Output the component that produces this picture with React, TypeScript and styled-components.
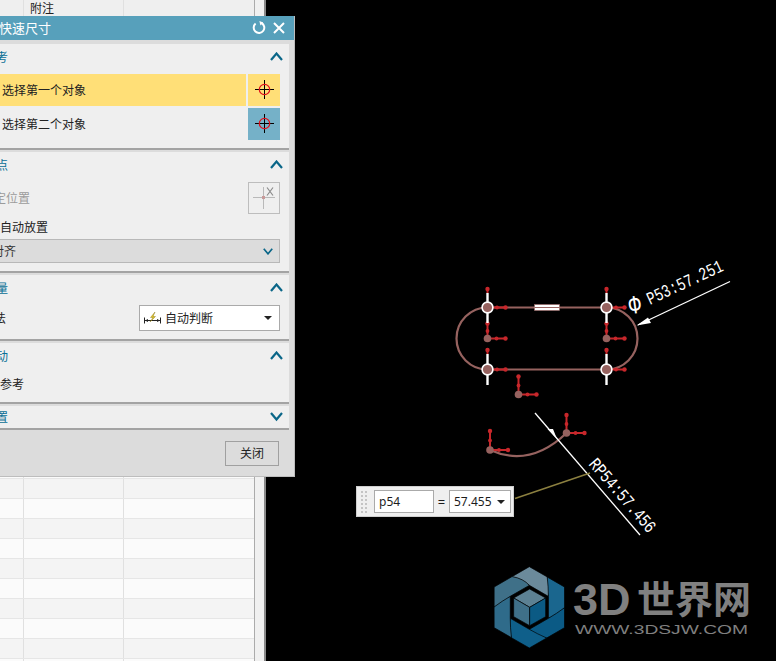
import React from 'react';
import styled, { createGlobalStyle } from 'styled-components';

const GlobalStyle = createGlobalStyle`
  html, body {
    margin: 0;
    padding: 0;
    background: #000;
    overflow: hidden;
  }
  body {
    font-family: "Noto Sans CJK SC", "Noto Sans", sans-serif;
    font-size: 12px;
  }
`;

const Page = styled.div`
  position: relative;
  display: flex;
  width: 776px;
  height: 661px;
  overflow: hidden;
  background: #000;
`;

/* ---- table behind the dialog ---- */

const TablePanel = styled.div`
  display: flex;
  flex: 0 0 266px;
  background: #f0f0f0;
  border-right: 2px solid #8a8a8a;
  box-sizing: border-box;
`;

const TableBody = styled.div`
  flex: 0 0 254px;
  margin-top: -1px;
  border-right: 1px solid #ababab;
`;

const TableRow = styled.div`
  display: flex;
  height: 20px;
  box-sizing: border-box;
  border-bottom: 1px solid #e6e6e6;
  background: #fbfbfb;

  &:nth-child(odd) {
    background: #f4f4f4;
  }
  &:first-child {
    background: #efefef;
  }
`;

const TableCell = styled.div<{ $width: number }>`
  flex: 0 0 ${(p) => p.$width}px;
  box-sizing: border-box;
  padding-left: 6px;
  border-right: 1px solid #e0e0e0;
  line-height: 18px;
  color: #222;
`;

/* ---- quick dimension dialog ---- */

const Dialog = styled.div`
  position: absolute;
  left: -30px;
  top: 16px;
  width: 325px;
  height: 461px;
  box-sizing: border-box;
  display: flex;
  flex-direction: column;
  background: #dcdcdc;
  border-right: 1px solid #bdbdbd;
  border-bottom: 1px solid #bdbdbd;
`;

const TitleBar = styled.div`
  flex: 0 0 24px;
  display: flex;
  align-items: center;
  padding: 0 9px 0 29px;
  background: #57a0bb;
  color: #fff;
  font-size: 13px;
`;

const TitleText = styled.span`
  flex: 1;
  margin-top: -2px;
`;

const TitleIcons = styled.div`
  display: flex;
  align-items: center;
  gap: 7px;
`;

const Sections = styled.div`
  display: flex;
  flex-direction: column;
  gap: 2px;
  margin: 4px 5px 0 0;
`;

const Section = styled.div<{ $bottom?: number }>`
  padding: 0 9px ${(p) => p.$bottom ?? 8}px 0;
  background: #efefef;
  border-bottom: 2px solid #a3a3a3;
`;

const SectionHead = styled.div<{ $height?: number }>`
  display: flex;
  align-items: center;
  justify-content: space-between;
  height: ${(p) => p.$height ?? 26}px;
  margin-bottom: ${(p) => (p.$height ? 0 : 4)}px;
  margin-right: -3px;
  padding-left: 14px;
  color: #0a6f96;
  font-size: 12px;
`;

const Label = styled.span`
  margin-top: -2px;
`;

const SelectRow = styled.div`
  display: flex;
  gap: 2px;
  height: 32px;
  margin-bottom: 2px;
  &:last-child {
    margin-bottom: 0;
  }
`;

const SelectLabel = styled.div<{ $active?: boolean }>`
  flex: 1;
  display: flex;
  align-items: center;
  padding-left: 32px;
  background: ${(p) => (p.$active ? '#ffdf77' : 'transparent')};
  color: #222;
`;

const IconBox = styled.div<{ $bg: string }>`
  flex: 0 0 32px;
  display: flex;
  align-items: center;
  justify-content: center;
  background: ${(p) => p.$bg};
`;

const PointRow = styled.div`
  display: flex;
  align-items: center;
  justify-content: space-between;
  height: 32px;
  padding-left: 12px;
  color: #9b9b9b;
`;

const PointButton = styled.div`
  width: 32px;
  height: 32px;
  box-sizing: border-box;
  display: flex;
  align-items: center;
  justify-content: center;
  border: 1px solid #bdbdbd;
`;

const PlainRow = styled.div<{ $left: number; $height: number }>`
  display: flex;
  align-items: center;
  height: ${(p) => p.$height}px;
  padding-left: ${(p) => p.$left}px;
  color: #222;
`;

const Combo = styled.div`
  display: flex;
  align-items: center;
  justify-content: space-between;
  height: 24px;
  box-sizing: border-box;
  padding: 0 6px 0 21px;
  background: #dcdcdc;
  border: 1px solid #b8b8b8;
  color: #333;
`;

const MethodRow = styled.div`
  display: flex;
  align-items: center;
  justify-content: space-between;
  height: 26px;
  padding-left: 12px;
  color: #222;
`;

const MethodSelect = styled.div`
  display: flex;
  align-items: center;
  gap: 4px;
  width: 141px;
  height: 26px;
  box-sizing: border-box;
  padding: 0 7px 0 4px;
  background: #fff;
  border: 1px solid #aaa;
  color: #222;
`;

const MethodText = styled.span`
  flex: 1;
  margin-top: -2px;
`;

const Caret = styled.span`
  width: 0;
  height: 0;
  border-left: 4px solid transparent;
  border-right: 4px solid transparent;
  border-top: 4px solid #222;
`;

const Footer = styled.div`
  flex: 1;
  display: flex;
  justify-content: flex-end;
  align-items: flex-start;
  padding: 11px 15px 0 0;
`;

const CloseButton = styled.button`
  width: 54px;
  height: 25px;
  padding: 0 0 2px;
  background: #dcdcdc;
  border: 1px solid #a0a0a0;
  color: #222;
  font: inherit;
`;

/* ---- graphics area ---- */

const Canvas = styled.div`
  position: relative;
  flex: 1;
  background: #000;
`;

const CanvasArt = styled.svg`
  display: block;
`;

const ValuePopup = styled.div`
  position: absolute;
  left: 90px;
  top: 486px;
  width: 158px;
  height: 31px;
  box-sizing: border-box;
  display: flex;
  align-items: center;
  padding-left: 4px;
  background: #efefef;
  border: 1px solid #cfcfcf;
  color: #1c1c1c;
  font-family: "Noto Sans", sans-serif;
  font-size: 12px;
`;

const Grip = styled.div`
  display: grid;
  grid-template-columns: 2px 2px;
  gap: 2px;
  margin-right: 7px;
`;

const GripDot = styled.span`
  width: 2px;
  height: 2px;
  background: #c4c4c4;
`;

const ValueField = styled.div<{ $width: number }>`
  display: flex;
  align-items: center;
  justify-content: space-between;
  width: ${(p) => p.$width}px;
  height: 23px;
  box-sizing: border-box;
  padding: 0 5px 0 4px;
  background: #fff;
  border: 1px solid #aaa;
`;

const Equals = styled.span`
  width: 15px;
  text-align: center;
  font-size: 13px;
`;

const Crosshair = () => (
  <svg width="20" height="20" viewBox="0 0 20 20">
    <path d="M10.5 0v19M1 9.5h19" stroke="#000" strokeWidth="1" fill="none" />
    <circle cx="10.5" cy="9.5" r="5.2" stroke="#e0101c" strokeWidth="1.2" fill="none" />
  </svg>
);

const PointIcon = () => (
  <svg width="24" height="24" viewBox="0 0 24 24" fill="none">
    <path d="M1 11.5h22M11.5 1v22" stroke="#b9b9b9" />
    <rect x="10" y="10" width="3" height="3" fill="#c89a9a" />
    <path d="M15 1.5l6 8M21 1.5l-6 8" stroke="#8c8c8c" strokeWidth="1.2" />
  </svg>
);

const Chevron = ({ up, size = 13 }: { up?: boolean; size?: number }) => (
  <svg width={size} height={size * 0.7} viewBox="0 0 13 9" fill="none">
    <path
      d={up ? 'M1 8l5.5-6.5L12 8' : 'M1 1l5.5 6.5L12 1'}
      stroke="#0a6688"
      strokeWidth="2.2"
    />
  </svg>
);

const RefreshIcon = () => (
  <svg width="14" height="14" viewBox="0 0 14 14" fill="none">
    <path d="M3.6 2.6A5.3 5.3 0 1 0 9.5 2" stroke="#fff" strokeWidth="2" />
    <path d="M7.4 0l3.8 1.5-2.8 3z" fill="#fff" />
  </svg>
);

const CloseIcon = () => (
  <svg width="12" height="12" viewBox="0 0 12 12" fill="none">
    <path d="M1 1l10 10M11 1L1 11" stroke="#fff" strokeWidth="2" />
  </svg>
);

const MethodIcon = () => (
  <svg width="17" height="13" viewBox="0 0 17 13" fill="none">
    <path d="M0.5 5.5v6M16.5 5.5v6M1 8.5h15" stroke="#222" />
    <path d="M1 8.5l3-1.5v3zM16 8.5l-3-1.5v3z" fill="#222" />
    <path d="M11 0L6.5 5.5h2.5L6 10l5.5-5.5H9z" fill="#e8c820" stroke="#7a6a10" strokeWidth="0.4" />
  </svg>
);

const NODE = '#96625f';
const RED = '#c8272b';

// red constraint handle: one arm to the right and one up, each with two beads
const Handle = ({ x, y, up = 19, right = 18 }: { x: number; y: number; up?: number; right?: number }) => (
  <g>
    <path d={`M${x} ${y}V${y - up}M${x} ${y}H${x + right}`} stroke={RED} strokeWidth="2" />
    <circle cx={x} cy={y - up} r="2.2" fill={RED} />
    <circle cx={x} cy={y - up / 2} r="1.9" fill={RED} />
    <circle cx={x + right} cy={y} r="2.2" fill={RED} />
    <circle cx={x + right / 2} cy={y} r="1.9" fill={RED} />
  </g>
);

// corner point of the slot with its white ring and white vertical mark
const CornerNode = ({ x, y, top, bottom }: { x: number; y: number; top: number; bottom: number }) => (
  <g>
    <path d={`M${x} ${top}V${bottom}`} stroke="#fff" strokeWidth="2.4" />
    <path d={`M${x} ${top}V${top - 3}`} stroke={RED} strokeWidth="2" />
    <circle cx={x} cy={top - 4} r="2.2" fill={RED} />
    <path d={`M${x} ${y}H${x + 18}`} stroke={RED} strokeWidth="2" />
    <circle cx={x + 9.5} cy={y} r="1.9" fill={RED} />
    <circle cx={x + 18} cy={y} r="2.2" fill={RED} />
    <circle cx={x} cy={y} r="5.4" fill={NODE} stroke="#fff" strokeWidth="1.6" />
  </g>
);

const BLADES = ['#6b8a9b', '#1a668e', '#0b5a85', '#0f5f8a', '#2f6b8a', '#3f7088'];

const Logo = () => (
  <g>
    <g transform="translate(488 562) scale(0.3333)">
      {BLADES.map((fill, i) => (
        <path
          key={fill}
          d="M72 44L124 14L178 45Q190 78 181 103L124 70Q100 56 72 44Z"
          fill={fill}
          stroke="#000"
          strokeWidth="2"
          transform={`rotate(${i * 60} 124 136)`}
        />
      ))}
      <path d="M125 81L173 108L125 136L77 108Z" fill="#5d8193" stroke="#000" strokeWidth="2" />
      <path d="M77 108L125 136V191L77 164Z" fill="#3f7089" stroke="#000" strokeWidth="2" />
      <path d="M173 108L125 136V191L173 164Z" fill="#0b5a84" stroke="#000" strokeWidth="2" />
    </g>
    <text
      x="573"
      y="615"
      fill="#808080"
      fontFamily='"Liberation Sans", sans-serif'
      fontWeight="700"
      fontSize="45"
    >
      3D
    </text>
    <text x="637" y="613" fill="#808080" fontFamily='"Noto Sans CJK SC", sans-serif' fontWeight="700" fontSize="38">
      世界网
    </text>
    <text
      x="575"
      y="634"
      fill="#808080"
      fontFamily='"Liberation Sans", sans-serif'
      fontSize="12.5"
      textLength="173"
      lengthAdjust="spacingAndGlyphs"
    >
      WWW.3DSJW.COM
    </text>
  </g>
);

const Drawing = () => (
  <CanvasArt width="510" height="661" viewBox="266 0 510 661">
    {/* slot outline */}
    <g stroke={NODE} strokeWidth="2.2" fill="none">
      <path d="M487.5 307.5H606.5M487.5 369.5H606.5" />
      <path d="M487.5 307.5A31 31 0 0 0 487.5 369.5" />
      <path d="M606.5 307.5A31 31 0 0 1 606.5 369.5" />
    </g>
    <rect x="534.5" y="304.5" width="25" height="6" fill="#fff" stroke="#96625f" strokeWidth="0.6" />
    <path d="M534.5 307.5H559.5" stroke="#96625f" strokeWidth="1" />

    <Handle x={487.5} y={338.5} up={15} />
    <Handle x={606.5} y={338.5} up={15} />
    <CornerNode x={487.5} y={307.5} top={293} bottom={323} />
    <CornerNode x={606.5} y={307.5} top={293} bottom={323} />
    <CornerNode x={487.5} y={369.5} top={354} bottom={385} />
    <CornerNode x={606.5} y={369.5} top={354} bottom={385} />
    <circle cx={487.5} cy={338.5} r="3.8" fill={NODE} />
    <circle cx={606.5} cy={338.5} r="3.8" fill={NODE} />
    <Handle x={518.5} y={394.5} up={18} />
    <circle cx={518.5} cy={394.5} r="3.8" fill={NODE} />

    {/* upper dimension */}
    <path d="M730 281.5L638 325" stroke="#fff" strokeWidth="1.3" />
    <path d="M636.5 325.5L648 317.5L651 323Z" fill="#fff" />
    <text
      x="630"
      y="314"
      fill="#fff"
      fontFamily='"Liberation Mono", monospace'
      fontSize="26"
      textLength="12"
      lengthAdjust="spacingAndGlyphs"
      transform="rotate(-8 630 314)"
    >
      Φ
    </text>
    <text
      x="650"
      y="305"
      fill="#fff"
      fontFamily='"Liberation Mono", monospace'
      fontSize="18"
      textLength="82"
      lengthAdjust="spacingAndGlyphs"
      transform="rotate(-25 650 305)"
    >
      P53:57.251
    </text>

    {/* arc below */}
    <path d="M490 450Q530 468 566.5 433" stroke={NODE} strokeWidth="2.2" fill="none" />
    <Handle x={490} y={450} />
    <Handle x={566.5} y={433} up={18} />
    <circle cx={490} cy={450} r="3.8" fill={NODE} />
    <circle cx={566.5} cy={433} r="3.8" fill={NODE} />

    {/* lower dimension */}
    <path d="M535 413L640 535" stroke="#fff" strokeWidth="1.3" />
    <path d="M557 439L547.5 429L553 429Z" fill="#fff" />
    <path d="M515 498.5L590 473" stroke="#8c8040" strokeWidth="1.5" />
    <text
      x="588"
      y="464.5"
      fill="#fff"
      fontFamily='"Liberation Mono", monospace'
      fontSize="18"
      textLength="92"
      lengthAdjust="spacingAndGlyphs"
      transform="rotate(49 588 464.5)"
    >
      RP54:57.456
    </text>

    <Logo />
  </CanvasArt>
);

const App = () => {
  const rows = Array.from({ length: 34 }, (_, i) => i);
  const dots = Array.from({ length: 12 }, (_, i) => i);

  return (
    <Page>
      <GlobalStyle />
      <TablePanel>
        <TableBody>
          {rows.map((i) => (
            <TableRow key={i}>
              <TableCell $width={24} />
              <TableCell $width={100}>{i === 0 ? '附注' : ''}</TableCell>
            </TableRow>
          ))}
        </TableBody>
      </TablePanel>

      <Canvas>
        <Drawing />
        <ValuePopup>
          <Grip>
            {dots.map((i) => (
              <GripDot key={i} />
            ))}
          </Grip>
          <ValueField $width={60}>p54</ValueField>
          <Equals>=</Equals>
          <ValueField $width={62}>
            57.455
            <Caret />
          </ValueField>
        </ValuePopup>
      </Canvas>

      <Dialog>
        <TitleBar>
          <TitleText>快速尺寸</TitleText>
          <TitleIcons>
            <RefreshIcon />
            <CloseIcon />
          </TitleIcons>
        </TitleBar>
        <Sections>
          <Section>
            <SectionHead>
              <Label>参考</Label>
              <Chevron up />
            </SectionHead>
            <SelectRow>
              <SelectLabel $active>
                <Label>选择第一个对象</Label>
              </SelectLabel>
              <IconBox $bg="#ffdf77">
                <Crosshair />
              </IconBox>
            </SelectRow>
            <SelectRow>
              <SelectLabel>
                <Label>选择第二个对象</Label>
              </SelectLabel>
              <IconBox $bg="#75b1c8">
                <Crosshair />
              </IconBox>
            </SelectRow>
          </Section>

          <Section>
            <SectionHead>
              <Label>原点</Label>
              <Chevron up />
            </SectionHead>
            <PointRow>
              <Label>指定位置</Label>
              <PointButton>
                <PointIcon />
              </PointButton>
            </PointRow>
            <PlainRow $left={30} $height={25}>
              自动放置
            </PlainRow>
            <Combo>
              <Label>对齐</Label>
              <Chevron size={10} />
            </Combo>
          </Section>

          <Section>
            <SectionHead>
              <Label>测量</Label>
              <Chevron up />
            </SectionHead>
            <MethodRow>
              <Label>方法</Label>
              <MethodSelect>
                <MethodIcon />
                <MethodText>自动判断</MethodText>
                <Caret />
              </MethodSelect>
            </MethodRow>
          </Section>

          <Section $bottom={7}>
            <SectionHead>
              <Label>驱动</Label>
              <Chevron up />
            </SectionHead>
            <PlainRow $left={6} $height={22}>
              <Label>设为参考</Label>
            </PlainRow>
          </Section>

          <Section $bottom={0}>
            <SectionHead $height={22}>
              <Label>设置</Label>
              <Chevron />
            </SectionHead>
          </Section>
        </Sections>
        <Footer>
          <CloseButton>关闭</CloseButton>
        </Footer>
      </Dialog>
    </Page>
  );
};

export default App;
